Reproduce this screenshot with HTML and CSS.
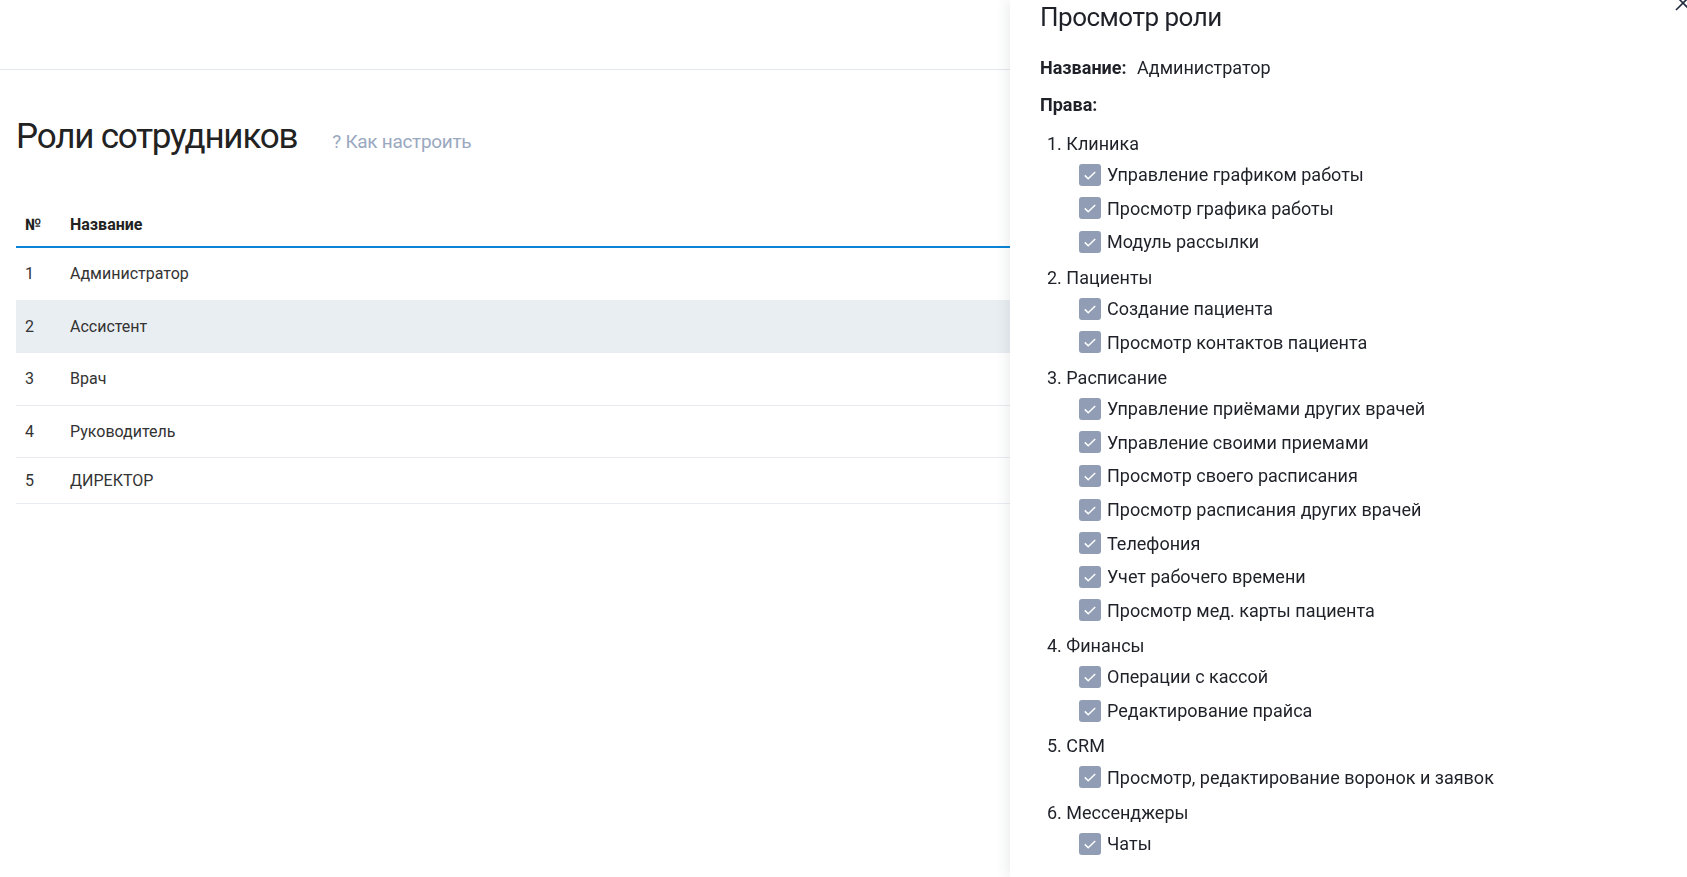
FILE: index.html
```html
<!DOCTYPE html>
<html lang="ru">
<head>
    <meta charset="UTF-8">
    <meta name="viewport" content="width=device-width, initial-scale=1.0">
    <title>Роли сотрудников</title>
    <link rel="stylesheet" href="styles.css">
</head>
<body>
    <!-- Top bar -->
    <div class="topbar"></div>

    <!-- Roles list -->
    <div class="page">
        <div class="page-head">
            <h1>Роли сотрудников</h1>
            <a class="help-link" href="#">? Как настроить</a>
        </div>

        <div class="roles">
            <div class="roles-row roles-head">
                <div class="col-num">№</div>
                <div class="col-name">Название</div>
            </div>
            <div class="roles-row">
                <div class="col-num">1</div>
                <div class="col-name">Администратор</div>
            </div>
            <div class="roles-row active">
                <div class="col-num">2</div>
                <div class="col-name">Ассистент</div>
            </div>
            <div class="roles-row">
                <div class="col-num">3</div>
                <div class="col-name">Врач</div>
            </div>
            <div class="roles-row">
                <div class="col-num">4</div>
                <div class="col-name">Руководитель</div>
            </div>
            <div class="roles-row last">
                <div class="col-num">5</div>
                <div class="col-name">ДИРЕКТОР</div>
            </div>
        </div>
    </div>

    <!-- Side drawer: role details -->
    <div class="drawer">
        <button class="drawer-close" type="button">
            <svg width="18" height="18" viewBox="0 0 18 18"><path d="M2 2L16 16M16 2L2 16" stroke="#1f2a3c" stroke-width="1.6" fill="none"/></svg>
        </button>
        <h2 class="drawer-title">Просмотр роли</h2>
        <div class="field"><b>Название:</b> <span class="field-value">Администратор</span></div>
        <div class="field field-rights"><b>Права:</b></div>

        <div class="rights">
            <div class="group">
                <div class="group-title">1. Клиника</div>
                <div class="perm"><span class="check"></span>Управление графиком работы</div>
                <div class="perm"><span class="check"></span>Просмотр графика работы</div>
                <div class="perm"><span class="check"></span>Модуль рассылки</div>
            </div>
            <div class="group">
                <div class="group-title">2. Пациенты</div>
                <div class="perm"><span class="check"></span>Создание пациента</div>
                <div class="perm"><span class="check"></span>Просмотр контактов пациента</div>
            </div>
            <div class="group">
                <div class="group-title">3. Расписание</div>
                <div class="perm"><span class="check"></span>Управление приёмами других врачей</div>
                <div class="perm"><span class="check"></span>Управление своими приемами</div>
                <div class="perm"><span class="check"></span>Просмотр своего расписания</div>
                <div class="perm"><span class="check"></span>Просмотр расписания других врачей</div>
                <div class="perm"><span class="check"></span>Телефония</div>
                <div class="perm"><span class="check"></span>Учет рабочего времени</div>
                <div class="perm"><span class="check"></span>Просмотр мед. карты пациента</div>
            </div>
            <div class="group">
                <div class="group-title">4. Финансы</div>
                <div class="perm"><span class="check"></span>Операции с кассой</div>
                <div class="perm"><span class="check"></span>Редактирование прайса</div>
            </div>
            <div class="group">
                <div class="group-title">5. CRM</div>
                <div class="perm"><span class="check"></span>Просмотр, редактирование воронок и заявок</div>
            </div>
            <div class="group">
                <div class="group-title">6. Мессенджеры</div>
                <div class="perm"><span class="check"></span>Чаты</div>
            </div>
        </div>
    </div>
</body>
</html>
```

FILE: styles.css
```css
body {
    margin: 0;
    padding: 0;
    font-family: Roboto, "Liberation Sans", sans-serif;
    color: #222;
    background: #fff;
    overflow: hidden;
}
.topbar {
    height: 69px;
    border-bottom: 1px solid #e3e7ee;
}
.page {
    padding: 0 16px;
}
.page-head {
    display: flex;
    align-items: baseline;
    margin-top: 45px;
}
.page-head h1 {
    margin: 0;
    font-size: 35px;
    line-height: 44px;
    font-weight: 400;
    letter-spacing: -1.2px;
    color: #222;
}
.help-link {
    margin-left: 35px;
    font-size: 19px;
    letter-spacing: -0.3px;
    color: #9aa8c0;
    text-decoration: none;
}
.roles {
    margin-top: 44px;
}
.roles-row {
    display: flex;
    align-items: center;
    height: 51.5px;
    border-bottom: 1px solid #e9edf1;
    font-size: 16px;
    color: #333;
}
.roles-row.active {
    background: #e9eef2;
}
.roles-row.last {
    height: 45px;
}
.roles-head {
    height: auto;
    padding: 12px 0 11px;
    line-height: 20px;
    font-weight: 700;
    color: #222;
    border-bottom: 2px solid #0a84d6;
}
.col-num {
    width: 45px;
    padding-left: 9px;
    box-sizing: content-box;
}
.col-name {
    flex: 1;
}

/* drawer */
.drawer {
    position: fixed;
    top: 0;
    right: 0;
    bottom: 0;
    width: 677px;
    padding: 1px 30px 0;
    box-sizing: border-box;
    background: #fff;
    box-shadow: -3px 0 12px rgba(40, 50, 70, 0.09);
    overflow: hidden;
    color: #1e2128;
}
.drawer-close {
    position: absolute;
    top: -6px;
    left: 664px;
    padding: 0;
    border: none;
    background: none;
    cursor: pointer;
}
.drawer-title {
    margin: 0;
    font-size: 26px;
    line-height: 32px;
    font-weight: 400;
    letter-spacing: -0.5px;
}
.field {
    margin-top: 21px;
    font-size: 18px;
    line-height: 28px;
}
.field-value {
    margin-left: 6px;
}
.field-rights {
    margin-top: 9px;
}
.rights {
    margin-top: 11px;
    font-size: 18px;
}
.group {
    margin-top: 5px;
}
.group-title {
    line-height: 28px;
    padding-left: 7px;
}
.perm {
    display: flex;
    align-items: center;
    height: 33.6px;
    padding-left: 39px;
}
.check {
    width: 22px;
    height: 22px;
    margin-right: 6px;
    border-radius: 3px;
    background: #909db5 url("data:image/svg+xml,%3Csvg xmlns='http://www.w3.org/2000/svg' width='22' height='22'%3E%3Cpath d='M5.8 11.4l3.4 3.4L16.2 8' stroke='%23fff' stroke-width='1.5' fill='none'/%3E%3C/svg%3E") no-repeat center;
    flex-shrink: 0;
}
```
